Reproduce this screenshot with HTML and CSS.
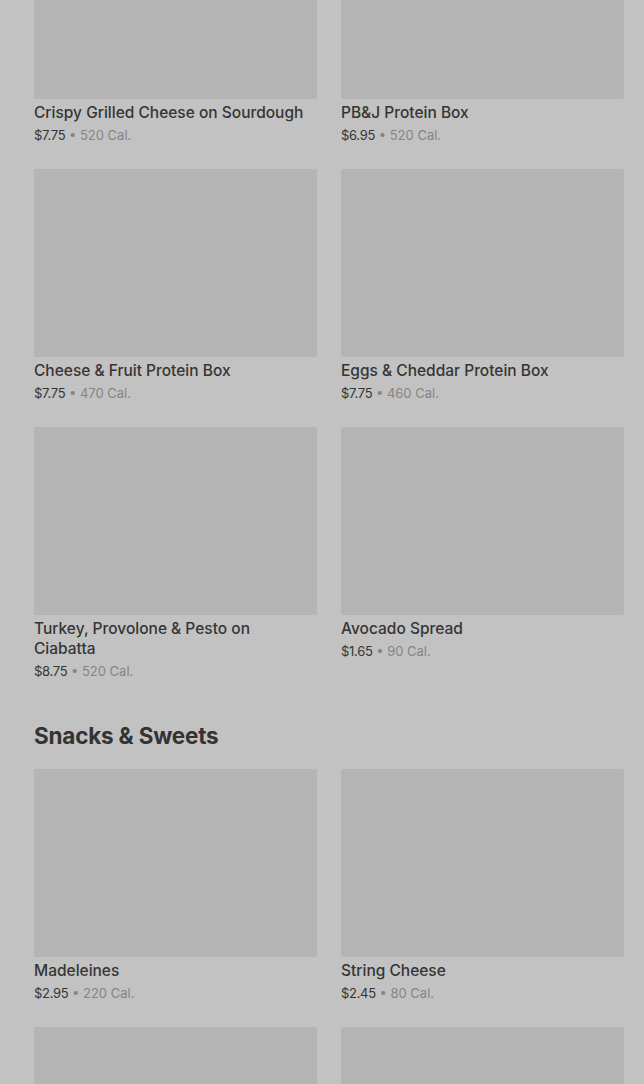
FILE: index.html
```html
<!DOCTYPE html>
<html lang="en">
<head>
    <meta charset="UTF-8">
    <meta name="viewport" content="width=device-width, initial-scale=1.0">
    <title>Menu</title>
    <link rel="stylesheet" href="styles.css">
</head>
<body>
    <div class="menu">
        <section class="section first">
            <div class="grid">
                <div class="item">
                    <div class="thumb"></div>
                    <div class="name">Crispy Grilled Cheese on Sourdough</div>
                    <div class="meta"><span class="price">$7.75</span> • 520 Cal.</div>
                </div>
                <div class="item">
                    <div class="thumb"></div>
                    <div class="name">PB&amp;J Protein Box</div>
                    <div class="meta"><span class="price">$6.95</span> • 520 Cal.</div>
                </div>
                <div class="item">
                    <div class="thumb"></div>
                    <div class="name">Cheese &amp; Fruit Protein Box</div>
                    <div class="meta"><span class="price">$7.75</span> • 470 Cal.</div>
                </div>
                <div class="item">
                    <div class="thumb"></div>
                    <div class="name">Eggs &amp; Cheddar Protein Box</div>
                    <div class="meta"><span class="price">$7.75</span> • 460 Cal.</div>
                </div>
                <div class="item">
                    <div class="thumb"></div>
                    <div class="name">Turkey, Provolone &amp; Pesto on Ciabatta</div>
                    <div class="meta"><span class="price">$8.75</span> • 520 Cal.</div>
                </div>
                <div class="item">
                    <div class="thumb"></div>
                    <div class="name">Avocado Spread</div>
                    <div class="meta"><span class="price">$1.65</span> • 90 Cal.</div>
                </div>
            </div>
        </section>

        <section class="section">
            <h2 class="section-title">Snacks &amp; Sweets</h2>
            <div class="grid">
                <div class="item">
                    <div class="thumb"></div>
                    <div class="name">Madeleines</div>
                    <div class="meta"><span class="price">$2.95</span> • 220 Cal.</div>
                </div>
                <div class="item">
                    <div class="thumb"></div>
                    <div class="name">String Cheese</div>
                    <div class="meta"><span class="price">$2.45</span> • 80 Cal.</div>
                </div>
                <div class="item">
                    <div class="thumb"></div>
                </div>
                <div class="item">
                    <div class="thumb"></div>
                </div>
            </div>
        </section>
    </div>
</body>
</html>
```

FILE: styles.css
```css
body {
    margin: 0;
    font-family: Inter, 'Noto Sans', sans-serif;
    background: #c2c2c2;
    color: #333333;
    overflow: hidden;
}

.menu {
    padding: 0 20px 0 34px;
}

.section.first {
    margin-top: -89px;
}

.section + .section {
    margin-top: 41px;
}

.section-title {
    margin: 0 0 19px;
    font-size: 22.5px;
    line-height: 28px;
    font-weight: 700;
    letter-spacing: -0.2px;
    color: #333333;
}

.grid {
    display: grid;
    grid-template-columns: repeat(2, 283px);
    column-gap: 24px;
    row-gap: 24px;
}

.thumb {
    height: 188px;
    background: #b4b4b4;
    border-radius: 2px;
}

.name {
    margin-top: 4px;
    padding-right: 10px;
    font-size: 15.5px;
    line-height: 20px;
    font-weight: 500;
    color: #353535;
}

.meta {
    margin-top: 2px;
    font-size: 13px;
    line-height: 20px;
    color: #858585;
}

.price {
    color: #353535;
    letter-spacing: -0.3px;
}
```
